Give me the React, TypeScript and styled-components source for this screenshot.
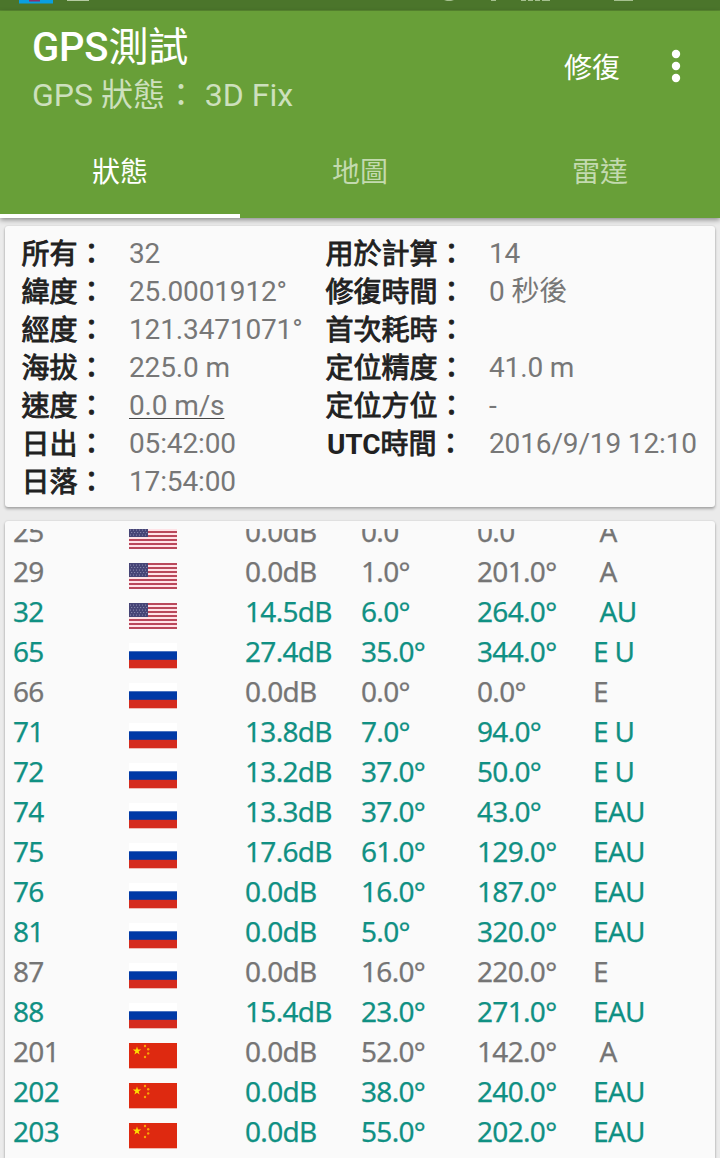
import React from "react";
import styled, { createGlobalStyle } from "styled-components";

const GlobalStyle = createGlobalStyle`
  html, body { margin: 0; padding: 0; }
  body { background: #ebebeb; overflow: hidden; }
  * { box-sizing: border-box; }
`;

const Screen = styled.div`
  width: 720px;
  height: 1158px;
  display: flex;
  flex-direction: column;
  overflow: hidden;
  background: #ebebeb;
  font-family: Roboto, "Noto Sans CJK TC", sans-serif;
`;

const StatusBar = styled.div`
  height: 11px;
  flex: none;
  background: #4b752b;
  border-bottom: 1px solid #598a31;
  svg { display: block; }
`;

const AppBar = styled.header`
  flex: none;
  height: 207px;
  background: #689f38;
  box-shadow: 0 2px 5px rgba(0, 0, 0, 0.4);
  display: flex;
  flex-direction: column;
  z-index: 1;
`;

const Toolbar = styled.div`
  height: 113px;
  display: flex;
  align-items: center;
  padding-left: 32px;
`;

const Titles = styled.div`
  flex: 1;
  display: flex;
  flex-direction: column;
  padding-top: 3px;
`;

const Title = styled.h1`
  margin: 0;
  font-size: 40px;
  line-height: 48px;
  font-weight: 500;
  letter-spacing: -0.2px;
  color: #fff;
`;

const TitleHan = styled.span`
  font-family: "Noto Sans CJK TC", sans-serif;
  font-weight: 400;
`;

const Subtitle = styled.div`
  font-size: 32px;
  line-height: 46px;
  color: #cde0bd;
  white-space: pre;
`;

const Action = styled.button`
  border: 0;
  padding: 3px 0 0;
  background: none;
  font: inherit;
  font-size: 28px;
  line-height: 40px;
  color: #fff;
`;

const MenuButton = styled.button`
  border: 0;
  background: none;
  padding: 0;
  margin: 0 0 3px 48px;
  width: 52px;
  height: 40px;
  svg { display: block; }
`;

const Tabs = styled.nav`
  flex: 1;
  display: flex;
`;

const Tab = styled.div<{ $active?: boolean }>`
  width: 240px;
  padding-top: 29px;
  text-align: center;
  font-size: 28px;
  line-height: 40px;
  color: ${(p) => (p.$active ? "#fff" : "#c3daaf")};
  border-bottom: 4px solid ${(p) => (p.$active ? "#fff" : "transparent")};
`;

const Card = styled.section`
  margin: 0 5px;
  background: #fafafa;
  border-radius: 3px;
  box-shadow: 0 2px 3px rgba(0, 0, 0, 0.28), 0 0 2px rgba(0, 0, 0, 0.14);
`;

const InfoCard = styled(Card)`
  flex: none;
  margin-top: 8px;
  height: 281px;
  padding: 9px 0 0 16px;
`;

const InfoRow = styled.div`
  display: grid;
  grid-template-columns: 108px 196px 164px 1fr;
  height: 38px;
  line-height: 38px;
  font-size: 28px;
  color: #777;
  white-space: nowrap;
`;

const Label = styled.span`
  padding: 1px 0 0 0.5px;
  font-weight: 400;
  -webkit-text-stroke: 0.9px #212121;
  color: #212121;
`;

const Latin = styled.span`
  padding-left: 1.5px;
  font-weight: 700;
  letter-spacing: -0.1px;
  -webkit-text-stroke: 0;
`;

const Value = styled.span<{ $link?: boolean }>`
  letter-spacing: -0.14px;
  text-decoration: ${(p) => (p.$link ? "underline" : "none")};
  text-decoration-thickness: 1px;
  text-decoration-color: #444;
  text-underline-offset: 3px;
`;

const ListCard = styled(Card)`
  margin-top: 14px;
  flex: 1;
  min-height: 0;
  border-bottom-left-radius: 0;
  border-bottom-right-radius: 0;
  padding: 8px 0 0 8px;
`;

const Viewport = styled.div`
  height: 100%;
  overflow: hidden;
  display: flex;
  flex-direction: column;
`;

const SatRow = styled.div<{ $used: boolean }>`
  flex: none;
  height: 40px;
  display: grid;
  grid-template-columns: repeat(5, 116px) 1fr;
  font-family: "Noto Sans", sans-serif;
  font-size: 28px;
  line-height: 40px;
  letter-spacing: -0.68px;
  white-space: pre;
  color: ${(p) => (p.$used ? "#109083" : "#757575")};
  -webkit-text-stroke: 0.25px currentColor;
  &:first-child { margin-top: -18px; }
`;

const FlagCell = styled.span`
  padding-top: 12px;
  svg { display: block; }
`;

type Country = "us" | "ru" | "cn";

const STAR = "M0-4.4 1-1.4H4.2L1.6.5 2.6 3.6 0 1.7-2.6 3.6-1.6.5-4.2-1.4H-1Z";

function Flag({ country }: { country: Country }) {
  if (country === "us") {
    return (
      <svg width="48" height="26" viewBox="0 0 48 26">
        <rect width="48" height="26" fill="#ffe3e7" />
        {[0, 1, 2, 3, 4, 5, 6].map((i) => (
          <rect key={i} y={i * 4} width="48" height="2" fill="#b9485b" />
        ))}
        <rect width="19" height="14" fill="#464576" />
        {[1.5, 4, 6.5, 9, 11.5].map((y, r) =>
          [2, 5, 8, 11, 14, 17].map((x) => (
            <circle key={`${x}-${y}`} cx={x + (r % 2 ? 0.7 : -0.5)} cy={y + 0.5} r="0.55" fill="#9c9bbd" />
          ))
        )}
      </svg>
    );
  }
  if (country === "ru") {
    return (
      <svg width="48" height="26" viewBox="0 0 48 26">
        <rect width="48" height="9" fill="#fff" />
        <rect y="8.3" width="48" height="8.7" fill="#0039a6" />
        <rect y="16.8" width="48" height="8.5" fill="#d52b1e" />
      </svg>
    );
  }
  return (
    <svg width="48" height="26" viewBox="0 0 48 26">
      <rect width="48" height="25.3" fill="#de2910" />
      <path d={STAR} transform="translate(8 8)" fill="#ffde00" />
      {[[16, 3], [19.2, 6.2], [19.2, 10.4], [16, 14]].map(([x, y]) => (
        <circle key={y} cx={x} cy={y} r="1.2" fill="#fba706" />
      ))}
    </svg>
  );
}

const info: [string, string, string, string][] = [
  ["所有：", "32", "用於計算：", "14"],
  ["緯度：", "25.0001912°", "修復時間：", "0 秒後"],
  ["經度：", "121.3471071°", "首次耗時：", ""],
  ["海拔：", "225.0 m", "定位精度：", "41.0 m"],
  ["速度：", "0.0 m/s", "定位方位：", "-"],
  ["日出：", "05:42:00", "UTC時間：", "2016/9/19 12:10"],
  ["日落：", "17:54:00", "", ""],
];

type Sat = [string, Country, string, string, string, string, boolean];
const satellites: Sat[] = [
  ["25", "us", "0.0dB", "0.0", "0.0", " A", false],
  ["29", "us", "0.0dB", "1.0°", "201.0°", " A", false],
  ["32", "us", "14.5dB", "6.0°", "264.0°", " AU", true],
  ["65", "ru", "27.4dB", "35.0°", "344.0°", "E U", true],
  ["66", "ru", "0.0dB", "0.0°", "0.0°", "E", false],
  ["71", "ru", "13.8dB", "7.0°", "94.0°", "E U", true],
  ["72", "ru", "13.2dB", "37.0°", "50.0°", "E U", true],
  ["74", "ru", "13.3dB", "37.0°", "43.0°", "EAU", true],
  ["75", "ru", "17.6dB", "61.0°", "129.0°", "EAU", true],
  ["76", "ru", "0.0dB", "16.0°", "187.0°", "EAU", true],
  ["81", "ru", "0.0dB", "5.0°", "320.0°", "EAU", true],
  ["87", "ru", "0.0dB", "16.0°", "220.0°", "E", false],
  ["88", "ru", "15.4dB", "23.0°", "271.0°", "EAU", true],
  ["201", "cn", "0.0dB", "52.0°", "142.0°", " A", false],
  ["202", "cn", "0.0dB", "38.0°", "240.0°", "EAU", true],
  ["203", "cn", "0.0dB", "55.0°", "202.0°", "EAU", true],
];

export default function App() {
  return (
    <>
      <GlobalStyle />
      <Screen>
        <StatusBar>
          <svg width="720" height="10" viewBox="0 0 720 10">
            <rect x="19" width="34" height="3.5" fill="#0a9fe0" />
            <rect x="29" width="11" height="1.5" fill="#8b2f6b" />
            <rect x="67" width="22" height="1" fill="#b5cba2" />
            <path d="M444 0h10l-3 1h-4z" fill="#a5c08f" />
            <rect x="491" width="5" height="1" fill="#a5c08f" />
            <path d="M521 0h5v1h-5zM528 0h5v1h-5zM535 0h5v1h-5zM542 0h8v1h-8z" fill="#a5c08f" />
            <rect x="614" width="19" height="1" fill="#a5c08f" />
          </svg>
        </StatusBar>
        <AppBar>
          <Toolbar>
            <Titles>
              <Title>GPS<TitleHan>測試</TitleHan></Title>
              <Subtitle>GPS 狀態： 3D Fix</Subtitle>
            </Titles>
            <Action>修復</Action>
            <MenuButton aria-label="menu">
              <svg width="16" height="40" viewBox="0 0 16 40" fill="#fff">
                <circle cx="8" cy="8" r="4.2" />
                <circle cx="8" cy="20" r="4.2" />
                <circle cx="8" cy="32" r="4.2" />
              </svg>
            </MenuButton>
          </Toolbar>
          <Tabs>
            <Tab $active>狀態</Tab>
            <Tab>地圖</Tab>
            <Tab>雷達</Tab>
          </Tabs>
        </AppBar>
        <InfoCard>
          {info.map(([l1, v1, l2, v2]) => (
            <InfoRow key={l1}>
              <Label>{l1}</Label>
              <Value $link={l1 === "速度："}>{v1}</Value>
              <Label>
                {l2.startsWith("UTC") ? <><Latin>UTC</Latin>{l2.slice(3)}</> : l2}
              </Label>
              <Value>{v2}</Value>
            </InfoRow>
          ))}
        </InfoCard>
        <ListCard>
          <Viewport>
            {satellites.map(([id, country, snr, elevation, azimuth, flags, used]) => (
              <SatRow key={id} $used={used}>
                <span>{id}</span>
                <FlagCell><Flag country={country} /></FlagCell>
                <span>{snr}</span>
                <span>{elevation}</span>
                <span>{azimuth}</span>
                <span>{flags}</span>
              </SatRow>
            ))}
          </Viewport>
        </ListCard>
      </Screen>
    </>
  );
}
